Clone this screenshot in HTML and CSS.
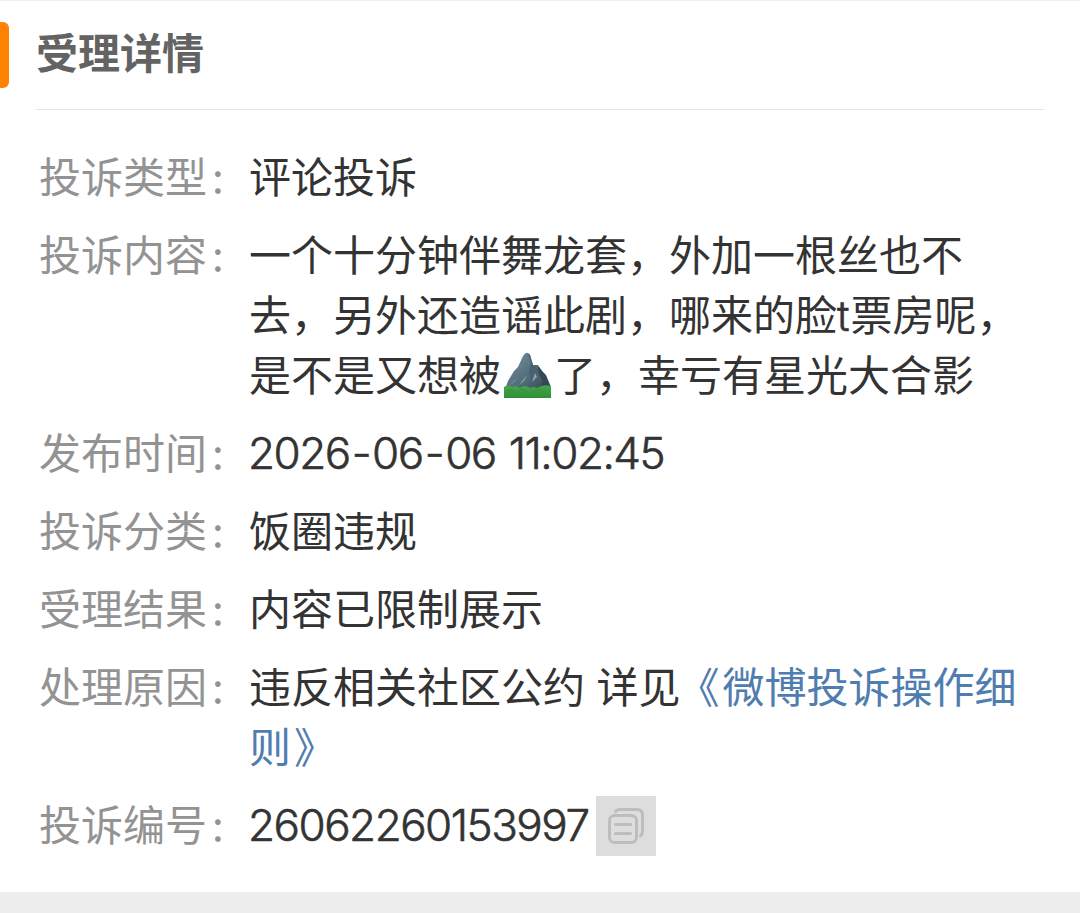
FILE: index.html
```html
<!DOCTYPE html>
<html lang="zh-CN">
<head>
    <meta charset="UTF-8">
    <meta name="viewport" content="width=device-width, initial-scale=1.0">
    <title>受理详情</title>
    <link rel="stylesheet" href="styles.css">
</head>
<body>
    <div class="card">
        <div class="title">
            <h1>受理详情</h1>
        </div>
        <div class="list">
            <div class="row">
                <span class="label">投诉类型<i>:</i></span>
                <p class="value">评论投诉</p>
            </div>
            <div class="row">
                <span class="label">投诉内容<i>:</i></span>
                <p class="value">一个十分钟伴舞龙套，外加一根丝也不<br>去，另外还造谣此剧，哪来的脸<span class="latin">t</span>票房呢，<br>是不是又想被<svg class="emoji" viewBox="0 0 48 48" role="img" aria-label="山">
                    <defs>
                        <linearGradient id="rock" x1="0" y1="0" x2="1" y2="1">
                            <stop offset="0" stop-color="#78909c"/>
                            <stop offset=".6" stop-color="#4f6977"/>
                            <stop offset="1" stop-color="#2b3d48"/>
                        </linearGradient>
                        <linearGradient id="grass" x1="0" y1="0" x2="0" y2="1">
                            <stop offset="0" stop-color="#46a849"/>
                            <stop offset="1" stop-color="#2e8f38"/>
                        </linearGradient>
                    </defs>
                    <path d="M1 38 L4 30 L10 20 L14 16 L19 5 Q23 -1 26 4 L29 14 L34 14 L38 20 L42 24 L47 36 V42 H1Z" fill="url(#rock)"/>
                    <path d="M24 3 L27 11 L25 20 L27 28 L22 38 L32 27 L35 19 L32 15 L29 14 L26 4Z" fill="#4a6270"/>
                    <path d="M34 15 L35 24 L39 30 L36 38 H47 L42 25Z" fill="#344955"/>
                    <path d="M22 5 L19 13 L15 19 L18 15Z M14 26 L6 34 L10 31Z M23 24 L15 34 L20 30Z M31 22 L28 31 L33 26Z" fill="#8fa3ad"/>
                    <path d="M0 36 Q4 33 8 36 Q12 34 16 37 Q21 33 26 37 Q30 35 33 37 Q39 33 47 35 V47 H0Z" fill="url(#grass)"/>
                    <path d="M3 41 Q7 37 11 41 M14 40 Q20 36 24 42 M30 41 Q35 37 40 41" fill="none" stroke="#348f3b" stroke-width="1"/>
                </svg>了，幸亏有星光大合影</p>
            </div>
            <div class="row">
                <span class="label">发布时间<i>:</i></span>
                <p class="value date">2026<b>-</b>06<b>-</b>06 11:02:45</p>
            </div>
            <div class="row">
                <span class="label">投诉分类<i>:</i></span>
                <p class="value">饭圈违规</p>
            </div>
            <div class="row">
                <span class="label">受理结果<i>:</i></span>
                <p class="value">内容已限制展示</p>
            </div>
            <div class="row">
                <span class="label">处理原因<i>:</i></span>
                <p class="value">违反相关社区公约 详见<a href="#"><span class="open">《</span>微博投诉操作细<br>则<span class="close">》</span></a></p>
            </div>
            <div class="row">
                <span class="label">投诉编号<i>:</i></span>
                <p class="value number">26062260153997</p>
                <button class="copy" aria-label="复制">
                    <svg viewBox="0 0 60 60" fill="none" stroke="#bdbdbd" stroke-width="3" stroke-linecap="round">
                        <rect x="13.5" y="19.5" width="27" height="27" rx="5"/>
                        <path d="M19.5 15.5 Q21 13.5 24 13.5 H41 Q46.5 13.5 46.5 19 V35 Q46.5 38.5 44.5 40"/>
                        <path d="M19.5 28.5 H34.5 M19.5 37.5 H34.5"/>
                    </svg>
                </button>
            </div>
        </div>
    </div>
</body>
</html>
```
FILE: styles.css
```css
* {
    box-sizing: border-box;
}

body {
    margin: 0;
    background-color: #ededed;
    font-family: "Noto Sans CJK SC", sans-serif;
    font-size: 42px;
    line-height: 60px;
    color: #333;
}

.card {
    height: 892px;
    background-color: #fff;
    border-top: 1px solid #f0f0f0;
    overflow: hidden;
}

.title {
    position: relative;
    height: 109px;
    margin: 0 36px;
    padding-top: 20px;
    border-bottom: 1px solid #e5e5e5;
}

.title::before {
    content: "";
    position: absolute;
    left: -36px;
    top: 21px;
    width: 9px;
    height: 66px;
    background-color: #ff8200;
    border-radius: 0 6px 6px 0;
}

.title h1 {
    margin: 0;
    font-size: 42px;
    font-weight: bold;
    color: #636363;
}

.list {
    display: flex;
    flex-direction: column;
    gap: 18px;
    padding: 38px 0 0 39px;
}

.row {
    display: flex;
}

.label {
    width: 210px;
    margin: -3px 0 3px;
    flex-shrink: 0;
    color: #939393;
}

.label i {
    margin-left: 5px;
    font-style: normal;
}

.value {
    margin: -3px 0 3px;
    white-space: nowrap;
    word-spacing: 2px;
}

.value a {
    color: #507daf;
    text-decoration: none;
}

.open {
    margin: 0 3px 0 -3px;
}

.close {
    margin-left: 3px;
}

.latin,
.date,
.number {
    font-family: Inter, "Noto Sans CJK SC", sans-serif;
    font-weight: 300;
    -webkit-text-stroke: 0.6px #333;
}

.latin {
    margin-right: 1px;
    line-height: 0;
}

.date,
.number {
    height: 60px;
    margin: -1px 0 1px -1px;
    font-size: 44px;
    letter-spacing: -1.5px;
}

.date b {
    margin: 0 2px;
    font-weight: 300;
}

.number {
    width: 342px;
}

.emoji {
    display: inline-block;
    width: 48px;
    height: 48px;
    margin: -6px 2px -6px 3px;
    vertical-align: -2px;
}

.copy {
    width: 60px;
    height: 60px;
    margin-left: 6px;
    padding: 0;
    border: none;
    background-color: #ddd;
}

.copy svg {
    display: block;
}
```
